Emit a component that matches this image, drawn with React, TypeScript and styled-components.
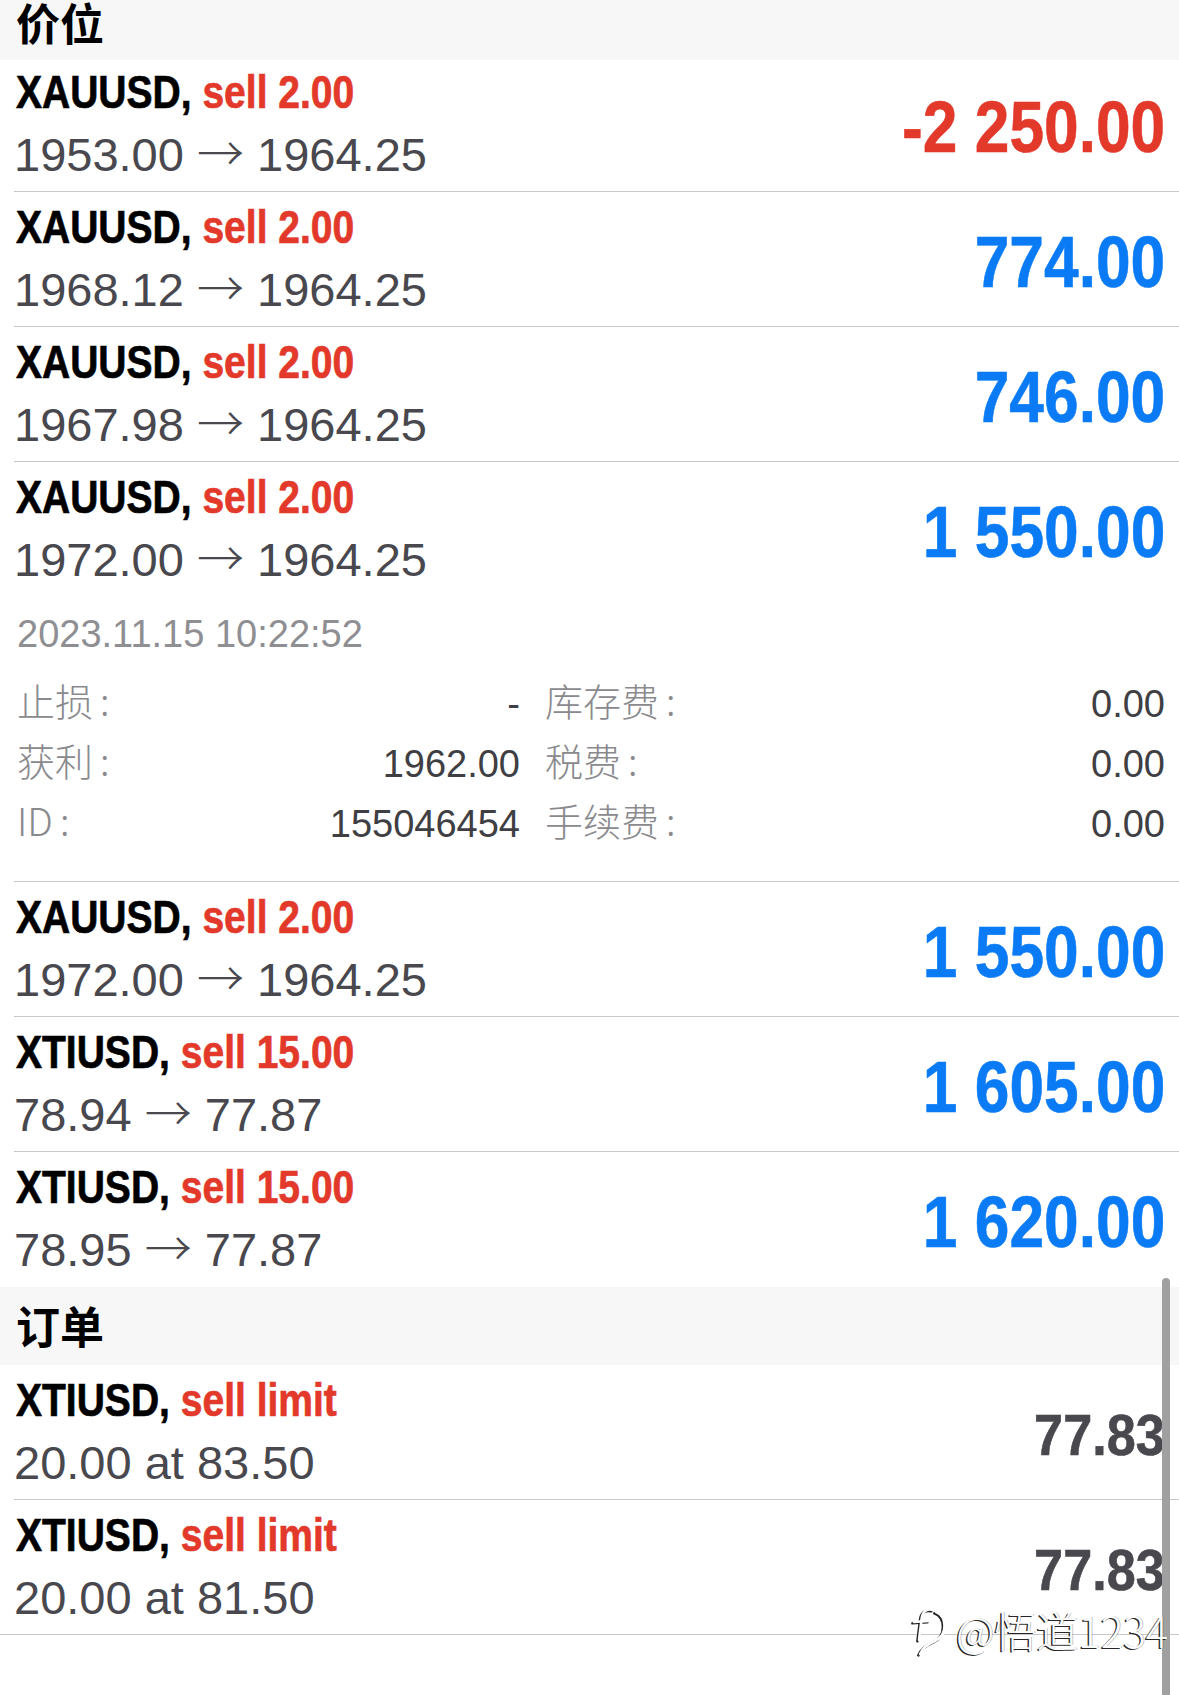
import React from "react";
import styled, { createGlobalStyle } from "styled-components";

const LATIN = `"Liberation Sans", Arial, "Noto Sans CJK SC", sans-serif`;
const CJK = `"Noto Sans CJK SC", "Liberation Sans", sans-serif`;

const RED = "#e2392b";
const BLUE = "#0a7bf5";
const INK = "#48484e";
const GRAY = "#8e8e93";
const LINE = "#c8c7cc";

const GlobalStyle = createGlobalStyle`
  html, body { margin: 0; padding: 0; background: #ffffff; }
  body { font-family: ${LATIN}; -webkit-font-smoothing: antialiased; }
`;

const Page = styled.div`
  position: relative;
  width: 1179px;
  min-height: 1695px;
  overflow: hidden;
  background: #ffffff;
`;

const SectionHeader = styled.div<{ $top?: boolean }>`
  display: flex;
  align-items: ${(p) => (p.$top ? "flex-start" : "center")};
  box-sizing: border-box;
  height: ${(p) => (p.$top ? 60 : 78)}px;
  padding: 0 0 ${(p) => (p.$top ? 0 : 3)}px 16px;
  background: #f7f7f7;
  font-family: ${CJK};
  font-weight: 700;
  font-size: 44px;
  line-height: 44px;
  color: #000;
`;

const Row = styled.div<{ $line: "inset" | "full" | "none" }>`
  padding-left: 14px;
  border-bottom: ${(p) => (p.$line === "full" ? `1px solid ${LINE}` : "none")};
`;

const RowBody = styled.div<{ $line: "inset" | "full" | "none" }>`
  padding-right: 14px;
  border-bottom: ${(p) =>
    p.$line === "inset" ? `1px solid ${LINE}` : p.$line === "none" ? "1px solid transparent" : "none"};
`;

const Main = styled.div<{ $first?: boolean }>`
  display: flex;
  align-items: center;
  justify-content: space-between;
  box-sizing: border-box;
  height: ${(p) => (p.$first ? 131 : 134)}px;
  padding: ${(p) => (p.$first ? 0 : 3)}px 0 5px 2px;
`;

const Lines = styled.div`
  display: flex;
  flex-direction: column;
`;

const Title = styled.div`
  font-family: ${LATIN};
  font-weight: 700;
  font-size: 47px;
  line-height: 63px;
  height: 63px;
  color: #000;
  white-space: nowrap;
  -webkit-text-stroke: 0.7px currentColor;
  transform: scaleX(0.83);
  transform-origin: left center;
`;

const Side = styled.span`
  color: ${RED};
`;

const Sub = styled.div`
  font-family: ${LATIN};
  font-size: 47px;
  line-height: 63px;
  height: 63px;
  color: ${INK};
  white-space: nowrap;
  margin-left: -2px;
`;

const Arrow = styled.span`
  font-family: ${CJK};
  font-weight: 300;
  font-size: 47px;
  line-height: 0;
`;

const Amount = styled.div<{ $tone: "loss" | "gain" | "price" }>`
  font-family: ${LATIN};
  font-weight: 700;
  font-size: ${(p) => (p.$tone === "price" ? 57 : 72)}px;
  line-height: 1;
  margin-top: 8px;
  color: ${(p) => (p.$tone === "loss" ? RED : p.$tone === "gain" ? BLUE : INK)};
  white-space: nowrap;
  -webkit-text-stroke: 0.6px currentColor;
  transform: scaleX(${(p) => (p.$tone === "price" ? 0.915 : 0.865)});
  transform-origin: right center;
`;

const Details = styled.div`
  padding: 13px 0 27px 3px;
`;

const Stamp = styled.div`
  font-family: ${LATIN};
  font-size: 38px;
  line-height: 50px;
  height: 50px;
  color: ${GRAY};
  margin-bottom: 15px;
`;

const FieldGrid = styled.div`
  display: grid;
  grid-template-columns: 503px 1fr;
  column-gap: 25px;
`;

const Field = styled.div`
  display: flex;
  align-items: center;
  justify-content: space-between;
  height: 60px;
`;

const Label = styled.span`
  font-family: ${CJK};
  font-weight: 300;
  font-size: 38px;
  line-height: 60px;
  color: #8a8a8e;
  margin-bottom: 8px;
  white-space: nowrap;
`;

const Colon = styled.span`
  margin-left: 7px;
`;

const Value = styled.span`
  font-family: ${LATIN};
  font-size: 38px;
  line-height: 60px;
  color: #3e3e43;
  white-space: nowrap;
`;

const Watermark = styled.div`
  position: absolute;
  left: 910px;
  top: 1603px;
  display: flex;
  align-items: center;
  gap: 6px;
  pointer-events: none;
`;

const WatermarkText = styled.span`
  font-family: ${CJK};
  font-weight: 300;
  font-size: 42px;
  line-height: 50px;
  color: #ffffff;
  text-shadow: -1.5px 1px 0 rgba(0, 0, 0, 0.85), 1px -0.5px 0 rgba(0, 0, 0, 0.25);
  white-space: nowrap;
`;

const ScrollThumb = styled.div`
  position: absolute;
  right: 9px;
  top: 1278px;
  bottom: 0;
  width: 8px;
  border-radius: 4px 4px 0 0;
  background: #a0a0a0;
`;

type Tone = "loss" | "gain" | "price";

interface Item {
  symbol: string;
  side: string;
  from?: string;
  to?: string;
  sub?: string;
  amount: string;
  tone: Tone;
  expanded?: boolean;
}

const positions: Item[] = [
  { symbol: "XAUUSD", side: "sell 2.00", from: "1953.00", to: "1964.25", amount: "-2 250.00", tone: "loss" },
  { symbol: "XAUUSD", side: "sell 2.00", from: "1968.12", to: "1964.25", amount: "774.00", tone: "gain" },
  { symbol: "XAUUSD", side: "sell 2.00", from: "1967.98", to: "1964.25", amount: "746.00", tone: "gain" },
  { symbol: "XAUUSD", side: "sell 2.00", from: "1972.00", to: "1964.25", amount: "1 550.00", tone: "gain", expanded: true },
  { symbol: "XAUUSD", side: "sell 2.00", from: "1972.00", to: "1964.25", amount: "1 550.00", tone: "gain" },
  { symbol: "XTIUSD", side: "sell 15.00", from: "78.94", to: "77.87", amount: "1 605.00", tone: "gain" },
  { symbol: "XTIUSD", side: "sell 15.00", from: "78.95", to: "77.87", amount: "1 620.00", tone: "gain" },
];

const orders: Item[] = [
  { symbol: "XTIUSD", side: "sell limit", sub: "20.00 at 83.50", amount: "77.83", tone: "price" },
  { symbol: "XTIUSD", side: "sell limit", sub: "20.00 at 81.50", amount: "77.83", tone: "price" },
];

const fields: [string, string][] = [
  ["止损", "-"],
  ["库存费", "0.00"],
  ["获利", "1962.00"],
  ["税费", "0.00"],
  ["ID", "155046454"],
  ["手续费", "0.00"],
];

function TradeRow({ item, line, first }: { item: Item; line: "inset" | "full" | "none"; first?: boolean }) {
  return (
    <Row $line={line}>
      <RowBody $line={line}>
        <Main $first={first}>
          <Lines>
            <Title>
              {item.symbol}, <Side>{item.side}</Side>
            </Title>
            <Sub>
              {item.sub ?? (
                <>
                  {item.from} <Arrow>→</Arrow> {item.to}
                </>
              )}
            </Sub>
          </Lines>
          <Amount $tone={item.tone}>{item.amount}</Amount>
        </Main>
        {item.expanded && (
          <Details>
            <Stamp>2023.11.15 10:22:52</Stamp>
            <FieldGrid>
              {fields.map(([label, value]) => (
                <Field key={label}>
                  <Label>
                    {label}
                    <Colon>:</Colon>
                  </Label>
                  <Value>{value}</Value>
                </Field>
              ))}
            </FieldGrid>
          </Details>
        )}
      </RowBody>
    </Row>
  );
}

function Logo() {
  const strokes = (
    <>
      <path d="M23 7 C15 5 12 10 11.5 17 L9 37" />
      <path d="M4 19 L19 18" />
      <path d="M26 9 C37 13 38 32 25 38 C18 41 13 44 10 51" />
    </>
  );
  return (
    <svg width="40" height="54" viewBox="0 0 40 54" fill="none" strokeLinecap="round" strokeWidth="2.6">
      <g stroke="rgba(0,0,0,0.85)" transform="translate(-1.6 1.3)">
        {strokes}
      </g>
      <g stroke="#ffffff">{strokes}</g>
    </svg>
  );
}

export default function App() {
  return (
    <Page>
      <GlobalStyle />
      <SectionHeader $top>价位</SectionHeader>
      {positions.map((p, i) => (
        <TradeRow
          key={i}
          item={p}
          first={i === 0}
          line={i === positions.length - 1 ? "none" : "inset"}
        />
      ))}
      <SectionHeader>订单</SectionHeader>
      {orders.map((o, i) => (
        <TradeRow key={i} item={o} line={i === orders.length - 1 ? "full" : "inset"} />
      ))}
      <ScrollThumb />
      <Watermark>
        <Logo />
        <WatermarkText>@悟道1234</WatermarkText>
      </Watermark>
    </Page>
  );
}
